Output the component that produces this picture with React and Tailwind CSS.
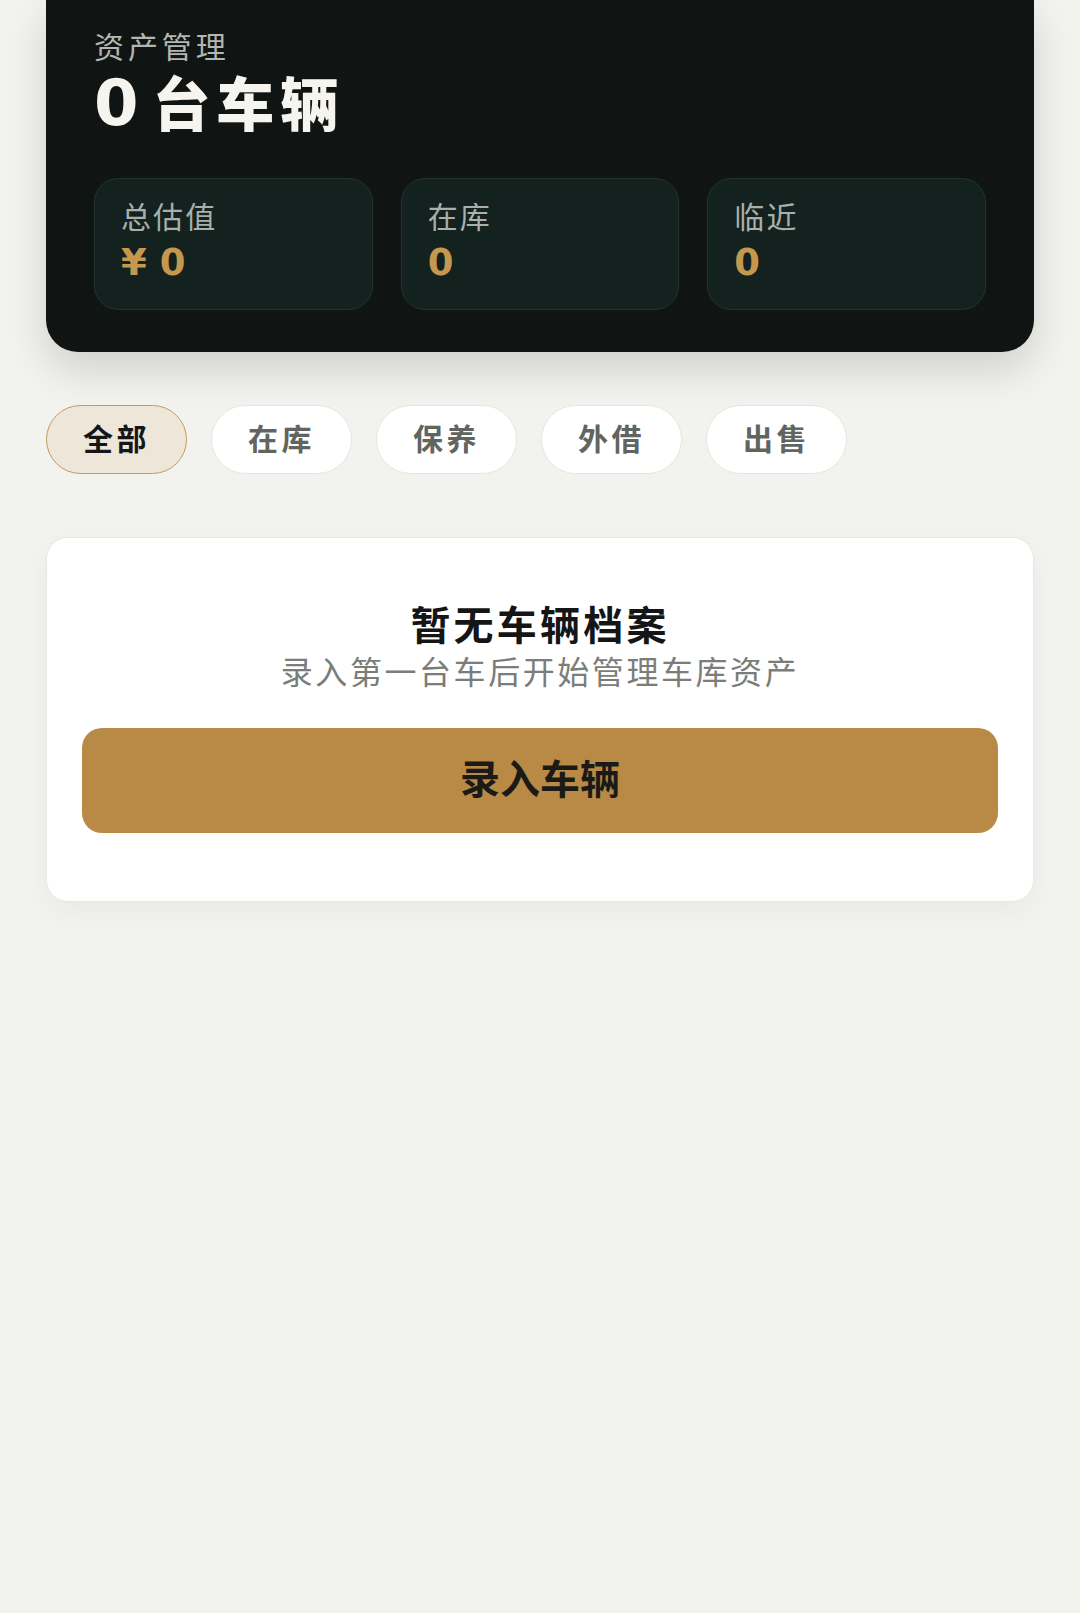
export default function App() {
    const stats = [
        { label: '总估值', value: '¥ 0' },
        { label: '在库', value: '0' },
        { label: '临近', value: '0' },
    ]
    const tabs = ['全部', '在库', '保养', '外借', '出售']
    const active = '全部'

    return (
        <div className="min-h-[1613px] bg-[#f2f2ee] px-[46px] font-['DejaVu_Sans','Noto_Sans_CJK_SC',sans-serif]">
            {/* 顶部资产卡片 */}
            <div className="bg-[#101412] rounded-b-[32px] px-[48px] pt-[28px] pb-[42px] shadow-[0_18px_40px_rgba(0,0,0,0.14)]">
                <div className="text-[30px] leading-[1.3] tracking-[0.13em] text-[#b3b6b1]">资产管理</div>
                <div className="mt-[6px] h-[62px] flex items-end text-[58px] leading-none tracking-[0.1em] font-black text-[#f6f4ef]">
                    <span className="text-[64px] tracking-normal mr-[14px]">0</span>
                    <span>台车辆</span>
                </div>
                <div className="mt-[43px] grid grid-cols-3 gap-[28px]">
                    {stats.map(s => (
                        <div key={s.label} className="h-[132px] rounded-[24px] bg-[#13221e] border border-[#22332d] pl-[26px] pt-[19px]">
                            <div className="text-[30px] leading-[1.3] tracking-[0.07em] text-[#a9b0ab]">{s.label}</div>
                            <div className="mt-[4px] text-[37px] leading-[1.2] font-bold text-[#c6974f]">{s.value}</div>
                        </div>
                    ))}
                </div>
            </div>

            {/* 筛选标签 */}
            <div className="mt-[53px] flex gap-[24px]">
                {tabs.map(t => (
                    <button
                        key={t}
                        className={`w-[141px] h-[69px] rounded-full text-[30px] tracking-[0.12em] font-bold flex items-center justify-center ${t === active ? 'bg-[#ede6d9] border-[1.5px] border-[#c29a62] text-[#161616]' : 'bg-white border border-[#e6e6e1] text-[#61655f]'}`}
                    >
                        {t}
                    </button>
                ))}
            </div>

            {/* 空状态 */}
            <div className="mt-[63px] bg-white rounded-[22px] border border-[#e8e8e3] px-[35px] pt-[62px] pb-[68px] shadow-[0_10px_30px_rgba(0,0,0,0.04)] text-center">
                <div className="text-[40px] leading-[1.3] tracking-[0.08em] font-bold text-[#151515]">暂无车辆档案</div>
                <div className="mt-[1px] text-[32px] leading-[1.3] tracking-[0.08em] text-[#7a7d78]">录入第一台车后开始管理车库资产</div>
                <button className="mt-[33px] w-full h-[105px] rounded-[20px] bg-[#b98a45] text-[40px] font-bold text-[#1c1a16]">录入车辆</button>
            </div>
        </div>
    )
}
